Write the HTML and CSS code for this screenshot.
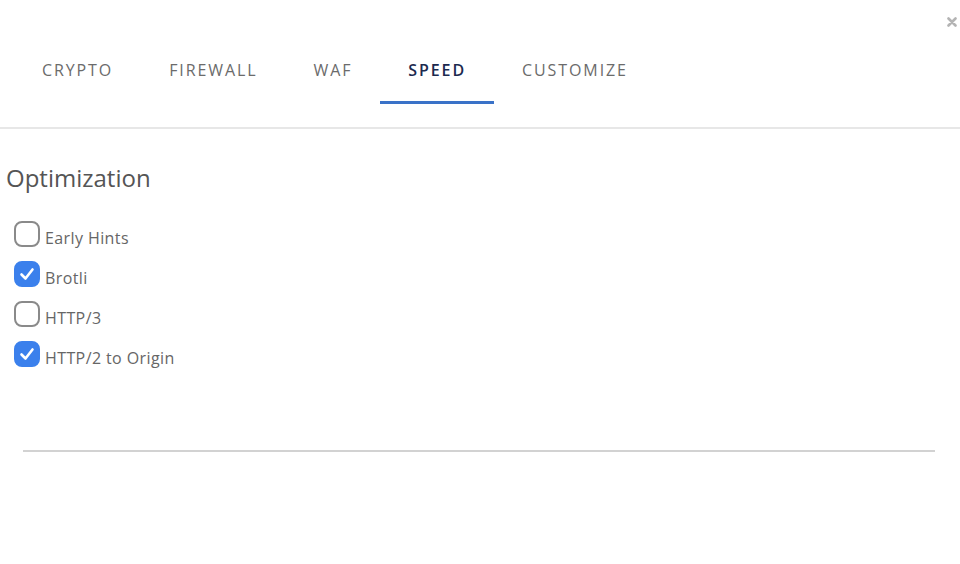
FILE: index.html
```
<!DOCTYPE html>
<html lang="en">
<head>
    <meta charset="UTF-8">
    <title>Speed settings</title>
    <link rel="stylesheet" href="styles.css">
</head>
<body>

<div class="modal">
    <button class="close-button" title="close">
        <svg width="10" height="10" viewBox="0 0 10 10"><path d="M1.5 1.5 L8.5 8.5 M8.5 1.5 L1.5 8.5" stroke="#b4b4b4" stroke-width="2.6" stroke-linecap="round"/></svg>
    </button>

    <div class="tabs">
        <div class="tab">CRYPTO</div>
        <div class="tab">FIREWALL</div>
        <div class="tab">WAF</div>
        <div class="tab active">SPEED</div>
        <div class="tab">CUSTOMIZE</div>
    </div>

    <div class="content">
        <h2 class="section-title">Optimization</h2>

        <label class="option">
            <span class="box"></span>
            <span class="option-label">Early Hints</span>
        </label>
        <label class="option">
            <span class="box checked">
                <svg width="18" height="18" viewBox="0 0 18 18"><path d="M3.5 9.5 L7.5 13.5 L14.5 4.5" fill="none" stroke="#fff" stroke-width="2.6" stroke-linecap="round" stroke-linejoin="round"/></svg>
            </span>
            <span class="option-label">Brotli</span>
        </label>
        <label class="option">
            <span class="box"></span>
            <span class="option-label">HTTP/3</span>
        </label>
        <label class="option">
            <span class="box checked">
                <svg width="18" height="18" viewBox="0 0 18 18"><path d="M3.5 9.5 L7.5 13.5 L14.5 4.5" fill="none" stroke="#fff" stroke-width="2.6" stroke-linecap="round" stroke-linejoin="round"/></svg>
            </span>
            <span class="option-label">HTTP/2 to Origin</span>
        </label>

        <div class="divider"></div>
    </div>
</div>

</body>
</html>
```

FILE: styles.css
```
body {
    font-family: 'Open Sans', 'Liberation Sans', sans-serif;
    background-color: #ffffff;
    margin: 0;
    padding: 0;
}

.modal {
    position: relative;
    width: 960px;
    height: 564px;
}

.close-button {
    position: absolute;
    top: 15px;
    right: 3px;
    border: none;
    background: none;
    padding: 0;
    width: 10px;
    height: 10px;
    cursor: pointer;
}

.tabs {
    display: flex;
    padding: 0 0 0 14px;
    height: 129px;
    border-bottom: 2px solid #e7e7e7;
    box-sizing: border-box;
}

.tab {
    padding: 59px 28px 0;
    font-size: 16px;
    letter-spacing: 1.9px;
    color: #6b6b6b;
    box-sizing: border-box;
    height: 104px;
    cursor: pointer;
}

.tab.active {
    color: #1c2a4f;
    font-weight: 600;
    border-bottom: 3px solid #3a72c8;
}

.content {
    padding: 0 25px 0 6px;
}

.section-title {
    font-weight: normal;
    font-size: 24px;
    color: #555555;
    margin: 32px 0 21px;
}

.option {
    display: flex;
    align-items: center;
    gap: 5px;
    height: 40px;
    margin-left: 8px;
    cursor: pointer;
}

.box {
    width: 26px;
    height: 26px;
    border: 2px solid #8a8a8a;
    border-radius: 8px;
    box-sizing: border-box;
    display: flex;
    align-items: center;
    justify-content: center;
    margin-top: -3px;
}

.box.checked {
    background-color: #3b80ec;
    border-color: #3b80ec;
}

.option-label {
    font-size: 16px;
    letter-spacing: 0.4px;
    color: #666666;
    margin-top: 6px;
}

.divider {
    margin: 75px 0 0 17px;
    border-top: 2px solid #d2d2d2;
}
```
